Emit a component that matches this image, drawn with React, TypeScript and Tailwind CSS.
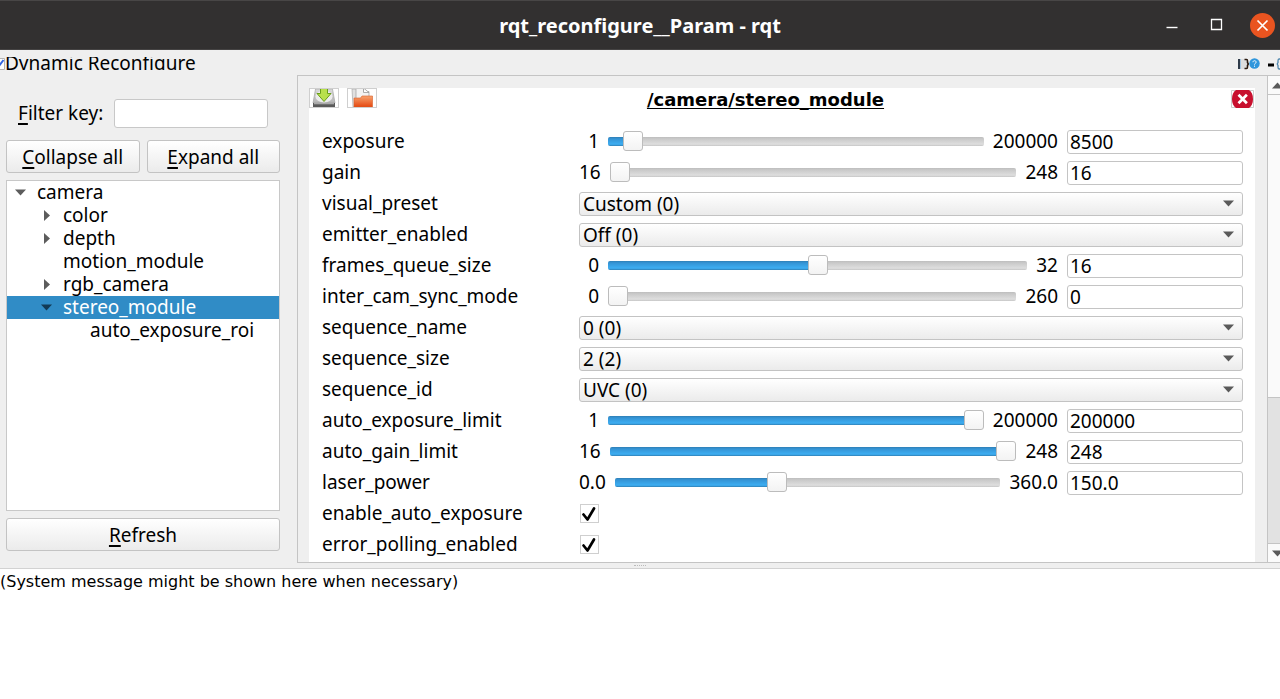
import React, { useState } from "react";

type SliderParam = { kind: "slider"; name: string; min: number; max: number; value: number; decimals?: number };
type SelectParam = { kind: "select"; name: string; option: string };
type CheckParam = { kind: "check"; name: string };
type Param = SliderParam | SelectParam | CheckParam;

const PARAMS: Param[] = [
  { kind: "slider", name: "exposure", min: 1, max: 200000, value: 8500 },
  { kind: "slider", name: "gain", min: 16, max: 248, value: 16 },
  { kind: "select", name: "visual_preset", option: "Custom (0)" },
  { kind: "select", name: "emitter_enabled", option: "Off (0)" },
  { kind: "slider", name: "frames_queue_size", min: 0, max: 32, value: 16 },
  { kind: "slider", name: "inter_cam_sync_mode", min: 0, max: 260, value: 0 },
  { kind: "select", name: "sequence_name", option: "0 (0)" },
  { kind: "select", name: "sequence_size", option: "2 (2)" },
  { kind: "select", name: "sequence_id", option: "UVC (0)" },
  { kind: "slider", name: "auto_exposure_limit", min: 1, max: 200000, value: 200000 },
  { kind: "slider", name: "auto_gain_limit", min: 16, max: 248, value: 248 },
  { kind: "slider", name: "laser_power", min: 0, max: 360, value: 150, decimals: 1 },
  { kind: "check", name: "enable_auto_exposure" },
  { kind: "check", name: "error_polling_enabled" },
];

type Node = { name: string; level: number; arrow?: "down" | "right" };

const TREE: Node[] = [
  { name: "camera", level: 0, arrow: "down" },
  { name: "color", level: 1, arrow: "right" },
  { name: "depth", level: 1, arrow: "right" },
  { name: "motion_module", level: 1 },
  { name: "rgb_camera", level: 1, arrow: "right" },
  { name: "stereo_module", level: 1, arrow: "down" },
  { name: "auto_exposure_roi", level: 2 },
];

const INDENT = ["pl-2", "pl-[34px]", "pl-[61px]"];

function Arrow({ dir, className = "" }: { dir: "down" | "right" | "up"; className?: string }) {
  const d = { down: "M0 2.5h11L5.5 8.5z", right: "M3 0v11l6-5.5z", up: "M0 8.5h11L5.5 2.5z" }[dir];
  return (
    <svg viewBox="0 0 11 11" className={`size-[11px] shrink-0 ${className}`} aria-hidden="true">
      <path d={d} fill="currentColor" />
    </svg>
  );
}

function PushButton({ children, className = "" }: { children: React.ReactNode; className?: string }) {
  return (
    <button
      className={`h-[33px] rounded-[3px] border border-[#c3c3c3] bg-linear-to-b from-white to-[#ebebeb] text-center leading-8 ${className}`}
    >
      {children}
    </button>
  );
}

function Key({ children }: { children: string }) {
  return <span className="underline decoration-2 underline-offset-3">{children}</span>;
}

function SliderRow({ p }: { p: SliderParam }) {
  const [value, setValue] = useState(p.value);
  const fmt = (n: number) => n.toFixed(p.decimals ?? 0);
  const frac = (value - p.min) / (p.max - p.min);
  const style = { "--fill": `calc(10px + (100% - 20px) * ${frac})` } as React.CSSProperties;
  return (
    <>
      <span className="min-w-5 text-right">{fmt(p.min)}</span>
      <input
        type="range"
        aria-label={`${p.name} slider`}
        min={p.min}
        max={p.max}
        value={value}
        onChange={(e) => setValue(Number(e.target.value))}
        style={style}
        className="h-5 min-w-0 flex-1 appearance-none bg-transparent [&::-webkit-slider-runnable-track]:h-[9px] [&::-webkit-slider-runnable-track]:rounded-[2px] [&::-webkit-slider-runnable-track]:bg-[linear-gradient(#2f7fb5,#3493d4_20%,#3daef2_80%,#2f7fb5),linear-gradient(#bdbdbd,#c9c9c9_20%,#dedede_80%,#c6c6c6)] [&::-webkit-slider-runnable-track]:[background-size:var(--fill)_100%,100%_100%] [&::-webkit-slider-runnable-track]:bg-no-repeat [&::-webkit-slider-thumb]:-mt-[6px] [&::-webkit-slider-thumb]:size-5 [&::-webkit-slider-thumb]:appearance-none [&::-webkit-slider-thumb]:rounded-[3px] [&::-webkit-slider-thumb]:border [&::-webkit-slider-thumb]:border-[#bcbcbc] [&::-webkit-slider-thumb]:bg-linear-to-b [&::-webkit-slider-thumb]:from-white [&::-webkit-slider-thumb]:to-[#f3f3f3]"
      />
      <span>{fmt(p.max)}</span>
      <input
        id={p.name}
        type="text"
        value={fmt(value)}
        onChange={(e) => setValue(Number(e.target.value) || p.min)}
        className="h-6 w-44 rounded-[3px] border border-[#c4c4c4] bg-white px-[2px]"
      />
    </>
  );
}

function ParamRow({ p }: { p: Param }) {
  return (
    <div className="flex h-[31px] items-center">
      <label htmlFor={p.name} className="w-[257px] shrink-0">
        {p.name}
      </label>
      <div className="flex min-w-0 flex-1 items-center gap-[9px]">
        {p.kind === "slider" && <SliderRow p={p} />}
        {p.kind === "select" && (
          <div className="relative flex-1">
            <select
              id={p.name}
              className="block h-6 w-full appearance-none rounded-[3px] border border-[#c3c3c3] bg-linear-to-b from-white to-[#ebebeb] pl-[3px] leading-[22px]"
            >
              <option>{p.option}</option>
            </select>
            <Arrow dir="down" className="pointer-events-none absolute top-1.5 right-[9px] text-[#5a5a5a]" />
          </div>
        )}
        {p.kind === "check" && (
          <span className="grid size-5 place-items-center">
            <input
              id={p.name}
              type="checkbox"
              defaultChecked
              className="peer col-start-1 row-start-1 size-[19px] appearance-none border border-[#cfcfcf] bg-white"
            />
            <svg
              viewBox="0 0 20 20"
              className="pointer-events-none invisible col-start-1 row-start-1 size-5 peer-checked:visible"
              aria-hidden="true"
            >
              <path d="M4.500 10.500 8.500 15.500 15 4.500" fill="none" stroke="#000" strokeWidth="2.700" strokeLinecap="round" strokeLinejoin="round" />
            </svg>
          </span>
        )}
      </div>
    </div>
  );
}

function SaveIcon() {
  return (
    <svg viewBox="0 0 28 18" className="h-full w-full" aria-hidden="true">
      <defs>
        <linearGradient id="drive" x1="0" y1="0" x2="0" y2="1">
          <stop offset="0" stopColor="#dcdcdc" />
          <stop offset="1" stopColor="#b4b4b4" />
        </linearGradient>
      </defs>
      <path d="M5.500 0h17l2.500 14h-22z" fill="url(#drive)" stroke="#9a9a9a" strokeWidth="0.600" />
      <ellipse cx="14" cy="7.500" rx="8.500" ry="6" fill="#ececec" />
      <path d="M3 14h22v4H3z" fill="#5a5a5a" />
      <path d="M4 14h20v1.300H4z" fill="#a9a9a9" />
      <path d="M10.500-1h7v5.500h3.500L14 12.500 7 4.500h3.500z" fill="#b8e04c" stroke="#6a9f1a" strokeWidth="1" />
    </svg>
  );
}

function OpenIcon() {
  return (
    <svg viewBox="0 0 28 18" className="h-full w-full" aria-hidden="true">
      <defs>
        <linearGradient id="folder" x1="0" y1="0" x2="0" y2="1">
          <stop offset="0" stopColor="#f7a36f" />
          <stop offset="1" stopColor="#e5470f" />
        </linearGradient>
      </defs>
      <path d="M4 0h5v18H5z" fill="#e0e0e0" stroke="#a9a9a9" strokeWidth="0.700" />
      <path d="M8-1h7.500v3.500H21V14H8z" fill="#f3f3f3" stroke="#a5a5a5" strokeWidth="0.800" />
      <path d="M15.500-1 21 3.500h-5.500z" fill="#fff" stroke="#999" strokeWidth="0.800" />
      <path d="M6 9h6.500L14 7h10.500v11H6z" fill="url(#folder)" stroke="#d9602a" strokeWidth="0.600" />
    </svg>
  );
}

export default function App() {
  return (
    <div className="flex min-h-screen flex-col overflow-hidden bg-[#efefef] font-['Noto_Sans',sans-serif] text-[19px] leading-[23px] text-black">
      <header className="grid h-[50px] grid-cols-[1fr_auto_1fr] items-center border-t border-b border-t-[#484646] border-b-[#454343] bg-[#323030] text-white">
        <h1 className="col-start-2 text-[20px] font-bold">rqt_reconfigure__Param - rqt</h1>
        <div className="flex items-center justify-end gap-[21px] pr-[5px]">
          <button aria-label="Minimize" className="grid size-6 place-items-center">
            <svg viewBox="0 0 24 24" className="size-6">
              <path d="M6.500 14.500h11" stroke="#fff" strokeWidth="1.400" />
            </svg>
          </button>
          <button aria-label="Maximize" className="grid size-6 place-items-center">
            <svg viewBox="0 0 24 24" className="size-6">
              <path d="M6.500 6.500h10v10h-10z" fill="none" stroke="#fff" strokeWidth="1.300" />
            </svg>
          </button>
          <button aria-label="Close" className="grid size-[25px] place-items-center rounded-full bg-[#e95420]">
            <svg viewBox="0 0 25 25" className="size-[25px]">
              <path d="m7.500 7.500 10 10m0-10-10 10" stroke="#fff" strokeWidth="1.700" />
            </svg>
          </button>
        </div>
      </header>

      <div className="flex h-[25px] items-start justify-between overflow-hidden pt-[7px]">
        <div className="flex h-[13px] overflow-hidden">
          <svg viewBox="0 0 5 13" className="mt-px h-[13px] w-[5px] shrink-0" aria-hidden="true">
            <path d="M-6 .5H4.500v11H-6" fill="#fff" stroke="#b5b5b5" />
            <path d="M-1 8 3.500 2" stroke="#3465e0" strokeWidth="2" />
          </svg>
          <h2 className="-mt-[5px]">Dynamic Reconfigure</h2>
        </div>
        <div className="flex h-[13px] items-center">
          <button aria-label="Dock options" className="h-3 w-[11px]">
            <svg viewBox="0 0 11 12" className="h-3 w-[11px]">
              <path d="M2 1h7v10H2z" fill="#dedede" />
              <path d="M1 1v10" stroke="#0c1a2c" strokeWidth="1.700" />
              <path d="M2.500 1v10" stroke="#9fc4e2" strokeWidth="1" />
              <path d="M6.500 1.500h2q1 0 1 1.500v1.500l.8 1.500-.8 1.500V9q0 1.500-1 1.500h-2" fill="none" stroke="#2a1a10" strokeWidth="1.600" />
            </svg>
          </button>
          <button aria-label="Help" className="size-[11px]">
            <svg viewBox="0 0 12 12" className="size-[11px]">
              <circle cx="6" cy="6" r="5.700" fill="#2f96dc" />
              <path d="M4.300 4.600C4.300 2.400 7.800 2.400 7.800 4.600 7.800 5.900 6 5.800 6 7.200M6 8.300v1.300" fill="none" stroke="#fff" />
            </svg>
          </button>
          <button aria-label="Undock" className="ml-2 h-3 w-[12px]">
            <svg viewBox="0 0 12 12" className="h-3 w-[12px]">
              <path d="M0 7h6" stroke="#000" strokeWidth="3" />
              <path d="M12.500 1h-1.500q-1 0-1 2v1.500L9.200 6l.8 1.500V9q0 2 1 2h1.500" fill="none" stroke="#4e86ad" strokeWidth="1.300" />
            </svg>
          </button>
        </div>
      </div>

      <main className="flex">
        <aside className="flex w-[280px] shrink-0 flex-col pt-6 pb-3 pl-[6px]">
          <div className="flex items-center pr-3 pl-3">
            <label htmlFor="filter" className="flex-1">
              <Key>F</Key>ilter key:
            </label>
            <input id="filter" type="text" className="h-[29px] w-[154px] rounded-[3px] border border-[#c8c8c8] bg-white px-1" />
          </div>
          <div className="mt-3 grid grid-cols-2 gap-[7px]">
            <PushButton>
              <Key>C</Key>ollapse all
            </PushButton>
            <PushButton>
              <Key>E</Key>xpand all
            </PushButton>
          </div>
          <ul role="tree" className="mt-[7px] flex-1 border border-[#c8c8c8] bg-white">
            {TREE.map((n) => (
              <li
                key={n.name}
                role="treeitem"
                className={`flex h-[23px] items-center gap-[11px] ${INDENT[n.level]} ${
                  n.name === "stereo_module" ? "bg-[#308cc6] text-white" : ""
                }`}
              >
                {n.arrow ? (
                  <Arrow dir={n.arrow} className={n.name === "stereo_module" ? "text-[#123a55]" : "text-[#5c5c5c]"} />
                ) : (
                  <span className="w-[11px] shrink-0" />
                )}
                <span>{n.name}</span>
              </li>
            ))}
          </ul>
          <PushButton className="mt-[7px]">
            <Key>R</Key>efresh
          </PushButton>
        </aside>

        <section className="ml-[17px] flex min-w-0 flex-1 border-t border-b border-l border-[#c4c4c4]">
          <div className="min-w-0 flex-1 pt-3 pr-3 pl-[11px]">
            <div className="bg-white pb-[2px]">
              <div className="flex h-[38px] items-start">
                <button aria-label="Save parameters" className="h-5 w-[30px] border border-[#cfcfcf]">
                  <SaveIcon />
                </button>
                <button aria-label="Load parameters" className="ml-2 h-5 w-[30px] border border-[#cfcfcf]">
                  <OpenIcon />
                </button>
                <h3 className="flex-1 pr-[77px] text-center font-['DejaVu_Sans',sans-serif] text-[18px] leading-[23px] font-bold underline underline-offset-2">
                  /camera/stereo_module
                </h3>
                <button aria-label="Close node" className="mt-[2px] mr-px h-[18px] w-[23px]">
                  <svg viewBox="0 0 23 18" className="h-[18px] w-[23px]">
                    <path d="M.5.5h22v17H.5z" fill="#fff" stroke="#ccc" />
                    <path d="M5 0h13c2.500 1.500 4 5 4 9s-1.500 7.500-4 9H5c-2.500-1.500-4-5-4-9s1.500-7.500 4-9z" fill="#c8102e" />
                    <path d="m7.500 4.800 8.400 8.400m0-8.400-8.400 8.400" stroke="#fff" strokeWidth="2.700" />
                  </svg>
                </button>
              </div>
              <div className="pr-3 pl-[13px]">
                {PARAMS.map((p) => (
                  <ParamRow key={p.name} p={p} />
                ))}
              </div>
            </div>
          </div>
          <div className="flex w-[13px] shrink-0 flex-col overflow-hidden border-l border-[#c4c4c4] bg-[#e2e2e2]">
            <div className="flex h-[19px] items-center border-b border-[#c4c4c4] bg-[#fafafa] pl-1 text-[#5a5a5a]">
              <Arrow dir="up" />
            </div>
            <div className="h-[303px] border-b border-[#c4c4c4] bg-[#fafafa]" />
            <div className="flex-1" />
            <div className="flex h-[19px] items-center border-t border-[#c4c4c4] bg-[#fafafa] pl-1 text-[#5a5a5a]">
              <Arrow dir="down" />
            </div>
          </div>
        </section>
      </main>

      <div className="flex h-[6px] items-center justify-center border-b border-[#d2d2d2]">
        <span className="w-3 border-t border-dotted border-[#bbb]" />
      </div>
      <footer className="flex-1 bg-white pt-px font-['DejaVu_Sans',sans-serif] text-[16px]">
        <p>(System message might be shown here when necessary)</p>
      </footer>
    </div>
  );
}
